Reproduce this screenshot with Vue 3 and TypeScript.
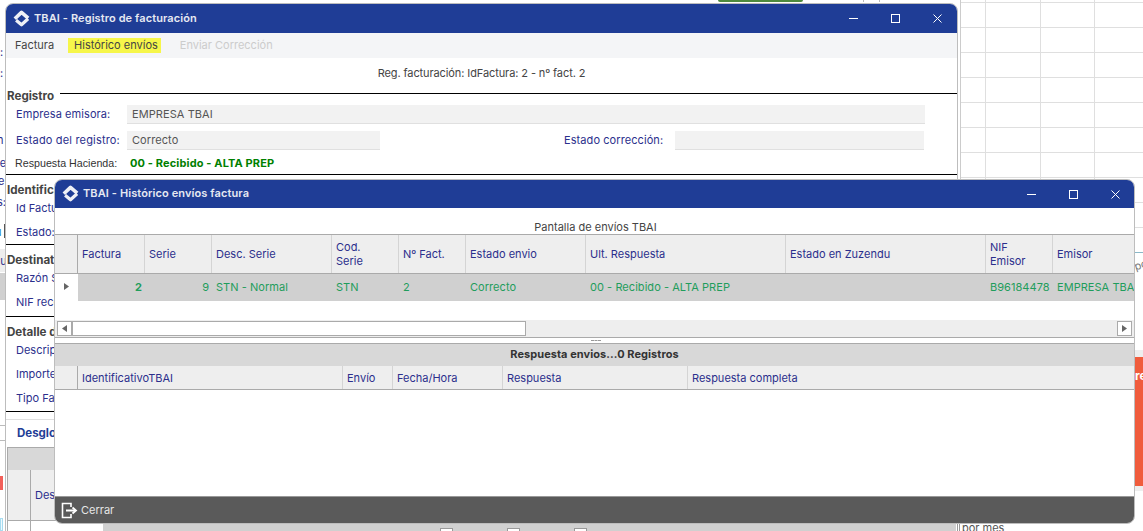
<script setup lang="ts">
interface Col { label: string; width: number; lines?: string[] }
const upperCols: Col[] = [
  { label: '', width: 23 },
  { label: 'Factura', width: 67 },
  { label: 'Serie', width: 67 },
  { label: 'Desc. Serie', width: 120 },
  { label: '', lines: ['Cod.', 'Serie'], width: 67 },
  { label: 'Nº Fact.', width: 67 },
  { label: 'Estado envio', width: 120 },
  { label: 'Ult. Respuesta', width: 200 },
  { label: 'Estado en Zuzendu', width: 200 },
  { label: '', lines: ['NIF', 'Emisor'], width: 67 },
  { label: 'Emisor', width: 81 }
]
const row = [
  { text: '', cls: 'blank' },
  { text: '2', cls: 'num strong' },
  { text: '9', cls: 'num' },
  { text: 'STN - Normal', cls: '' },
  { text: 'STN', cls: '' },
  { text: '2', cls: '' },
  { text: 'Correcto', cls: '' },
  { text: '00 - Recibido - ALTA PREP', cls: '' },
  { text: '', cls: '' },
  { text: 'B96184478', cls: '' },
  { text: 'EMPRESA TBAI', cls: '' }
]
const lowerCols: Col[] = [
  { label: '', width: 23 },
  { label: 'IdentificativoTBAI', width: 265 },
  { label: 'Envío', width: 50 },
  { label: 'Fecha/Hora', width: 110 },
  { label: 'Respuesta', width: 185 },
  { label: 'Respuesta completa', width: 446 }
]
const sections = [
  { title: 'Identificación', rows: ['Id Factura:', 'Estado:'], cls: 'sec-a' },
  { title: 'Destinatario', rows: ['Razón Social:', 'NIF receptor:'], cls: 'sec-b' },
  { title: 'Detalle de la factura', rows: ['Descripción:', 'Importe:', 'Tipo Factura:'], cls: 'sec-c' }
]
const grid = (cols: Col[]) => ({ gridTemplateColumns: cols.map(c => c.width + 'px').join(' ') })
</script>

<template>
  <div class="desk">
    <!-- application behind the windows -->
    <div class="sheet"></div>
    <div class="top-green"></div>
    <div class="top-tick t1"></div>
    <div class="top-tick t2"></div>
    <div class="back-left">
      <span class="bl b1">:</span>
      <span class="bl b2">:</span>
      <span class="bl b3">n</span>
      <span class="bl b4">le</span>
      <span class="bl b5">e</span>
      <span class="bl b6">s:</span>
      <span class="bl b7">u</span>
      <span class="bl-box"></span>
      <span class="bl-head">cu</span>
      <span class="bl-row"></span>
      <span class="bl-line l1"></span>
      <span class="bl-line l2"></span>
      <span class="bl-red"></span>
      <span class="bl-blue"></span>
    </div>
    <div class="back-right">
      <div class="br-teal"></div>
      <span class="br-rot">por</span>
      <div class="br-grey"></div>
      <div class="br-orange">re</div>
      <div class="br-grey2"></div>
    </div>

    <!-- window 1 -->
    <section class="win win-one">
      <header class="title title-one">
        <svg class="logo" viewBox="0 0 17 17" width="17" height="17" fill="none" stroke="#eef0f6" stroke-width="3.6" stroke-linejoin="round">
          <path d="M1.800 8.800 8.500 2.400l6.700 5.700" />
          <path d="M3.100 10.200l5.400 4.600 6.600-6" stroke-width="3.200" />
        </svg>
        <span class="title-text">TBAI - Registro de facturación</span>
        <div class="ctrls">
          <svg width="9" height="9" viewBox="0 0 9 9" stroke="#fff" fill="none"><path d="M0 4.500h9" /></svg>
          <svg width="9" height="9" viewBox="0 0 9 9" stroke="#fff" fill="none"><rect x=".5" y=".5" width="8" height="8" /></svg>
          <svg width="9" height="9" viewBox="0 0 9 9" stroke="#fff" fill="none"><path d="M.5.5l8 8M8.500.5l-8 8" /></svg>
        </div>
      </header>
      <nav class="menu">
        <span class="mi">Factura</span>
        <span class="mi hl">Histórico envíos</span>
        <span class="mi off">Enviar Corrección</span>
      </nav>
      <div class="caption-one">Reg. facturación: IdFactura: 2 - nº fact. 2</div>
      <div class="legend"><strong>Registro</strong><i></i></div>
      <div class="frow">
        <label class="lb">Empresa emisora:</label>
        <div class="fld wide">EMPRESA TBAI</div>
      </div>
      <div class="frow second">
        <label class="lb">Estado del registro:</label>
        <div class="fld half">Correcto</div>
        <label class="lb lb2">Estado corrección:</label>
        <div class="fld half2"></div>
      </div>
      <div class="frow third">
        <label class="lb dark">Respuesta Hacienda:</label>
        <b class="ok">00 - Recibido - ALTA PREP</b>
      </div>
      <div v-for="s in sections" :key="s.title" class="sec" :class="s.cls">
        <strong class="sec-head">{{ s.title }}</strong>
        <div v-for="r in s.rows" :key="r" class="sec-row">{{ r }}</div>
      </div>
      <div class="desglose">
        <strong>Desglose</strong>
      </div>
      <div class="dtable">
        <div class="dt-top"></div>
        <div class="dt-head"><span class="dt-a"></span><span class="dt-b">Descripción</span></div>
        <div class="dt-foot"><span class="dt-a"></span></div>
      </div>
      <div class="back-bottom">
        <span class="chk c1"></span><span class="chk c2"></span><span class="chk c3"></span>
      </div>
    </section>
    <span class="por-mes">por mes</span>
    <span class="v-dbl"></span>

    <!-- window 2 -->
    <section class="win win-two">
      <header class="title title-two">
        <svg class="logo" viewBox="0 0 17 17" width="17" height="17" fill="none" stroke="#eef0f6" stroke-width="3.6" stroke-linejoin="round">
          <path d="M1.800 8.800 8.500 2.400l6.700 5.700" />
          <path d="M3.100 10.200l5.400 4.600 6.600-6" stroke-width="3.200" />
        </svg>
        <span class="title-text">TBAI - Histórico envíos factura</span>
        <div class="ctrls">
          <svg width="9" height="9" viewBox="0 0 9 9" stroke="#fff" fill="none"><path d="M0 4.500h9" /></svg>
          <svg width="9" height="9" viewBox="0 0 9 9" stroke="#fff" fill="none"><rect x=".5" y=".5" width="8" height="8" /></svg>
          <svg width="9" height="9" viewBox="0 0 9 9" stroke="#fff" fill="none"><path d="M.5.5l8 8M8.500.5l-8 8" /></svg>
        </div>
      </header>
      <div class="caption-two">Pantalla de envíos TBAI</div>
      <div class="thead upper" :style="grid(upperCols)">
        <div v-for="(c, i) in upperCols" :key="i" class="th">
          <template v-if="c.lines"><span>{{ c.lines[0] }}<br />{{ c.lines[1] }}</span></template>
          <template v-else>{{ c.label }}</template>
        </div>
      </div>
      <div class="trow" :style="grid(upperCols)">
        <div v-for="(c, i) in row" :key="i" class="td" :class="c.cls">
          <svg v-if="i === 0" width="5" height="7" viewBox="0 0 5 7"><path d="M0 0l5 3.500L0 7z" fill="#666" /></svg>
          {{ c.text }}
        </div>
      </div>
      <div class="spacer-a"></div>
      <div class="hscroll">
        <span class="sbtn"><svg width="5" height="7" viewBox="0 0 5 7"><path d="M5 0L0 3.500 5 7z" fill="#666" /></svg></span>
        <span class="sthumb"></span>
        <span class="sbtn end"><svg width="5" height="7" viewBox="0 0 5 7"><path d="M0 0l5 3.500L0 7z" fill="#666" /></svg></span>
      </div>
      <div class="splitter"><span></span></div>
      <div class="lower-title">Respuesta envios...0 Registros</div>
      <div class="thead lower" :style="grid(lowerCols)">
        <div v-for="(c, i) in lowerCols" :key="i" class="th">{{ c.label }}</div>
      </div>
      <div class="empty"></div>
      <footer class="foot">
        <svg width="17" height="17" viewBox="0 0 17 17" fill="none" stroke="#fff" stroke-width="1.600">
          <path d="M10 5V1.500H1.500v14H10V12" />
          <path d="M5 8.500h9" stroke-width="2" />
          <path d="M11.500 5.500l3.500 3-3.500 3" stroke-width="1.800" />
        </svg>
        <span>Cerrar</span>
      </footer>
    </section>
  </div>
</template>

<style>
html, body { margin: 0; padding: 0; background: #fff; }
</style>

<style scoped>
.desk {
  position: relative;
  width: 1143px;
  height: 531px;
  overflow: hidden;
  background: #fff;
  font-family: Inter, "Liberation Sans", sans-serif;
  font-size: 11px;
  color: #444;
}
.sheet {
  position: absolute;
  left: 960px;
  top: 0;
  width: 183px;
  height: 252px;
  border-left: 1px solid #ccc;
  box-sizing: border-box;
  background-image:
    repeating-linear-gradient(to bottom, transparent 0 2px, #dfdfdf 2px 3px, transparent 3px 25px),
    linear-gradient(#dfdfdf, #dfdfdf),
    linear-gradient(#dfdfdf, #dfdfdf),
    linear-gradient(#dfdfdf, #dfdfdf);
  background-size: 100% 100%, 1px 100%, 1px 100%, 1px 100%;
  background-position: 0 0, 24px 0, 79px 0, 133px 0;
  background-repeat: no-repeat;
}
.top-green { position: absolute; left: 718px; top: 0; width: 85px; height: 2px; background: #4d8a3d; border-radius: 0 0 4px 4px; }
.top-tick { position: absolute; top: 0; width: 1px; height: 2px; background: #bbb; }
.t1 { left: 863px; }
.t2 { left: 879px; }

.back-left { position: absolute; left: 0; top: 0; width: 5px; height: 531px; overflow: hidden; color: #2b2f8c; }
.bl { position: absolute; left: 0; line-height: 14px; }
.b1 { top: 45px; }
.b2 { top: 66px; }
.b3 { top: 133px; left: -3px; }
.b4 { top: 156px; left: -3px; }
.b5 { top: 174px; left: -2px; }
.b6 { top: 195px; left: -3px; }
.b7 { top: 225px; left: -5px; color: #1b7fc4; }
.bl-box { position: absolute; left: 4px; top: 224px; width: 1px; height: 14px; background: #555; }
.bl-head { position: absolute; left: 0; top: 249px; width: 5px; height: 23px; background: #eee; line-height: 24px; text-indent: -6px; overflow: hidden; }
.bl-row { position: absolute; left: 0; top: 273px; width: 5px; height: 27px; background: #d0d0d0; }
.bl-line { position: absolute; left: 0; width: 5px; height: 1px; background: #bbb; }
.l1 { top: 425px; }
.l2 { top: 440px; }
.bl-red { position: absolute; left: 0; top: 476px; width: 3px; height: 14px; background: #f2605a; }
.bl-blue { position: absolute; left: 0; top: 518px; width: 3px; height: 13px; border: 1px solid #a8dcf0; box-sizing: border-box; background: #eefaff; }

.back-right { position: absolute; left: 1134px; top: 252px; width: 9px; height: 279px; overflow: hidden; }
.br-teal { height: 1px; background: #8ab8c8; }
.br-rot { position: absolute; left: 0; top: 5px; color: #777; transform: rotate(-18deg); }
.br-grey { position: absolute; left: 0; top: 98px; width: 9px; height: 7px; background: #eee; }
.br-orange { position: absolute; left: 0; top: 105px; width: 9px; height: 129px; background: #f05c3c; color: #fff; font-weight: 700; font-size: 12px; line-height: 37px; text-indent: 1px; white-space: nowrap; overflow: hidden; }
.br-grey2 { position: absolute; left: 0; top: 234px; width: 9px; height: 5px; background: #eee; }

.back-bottom { position: absolute; left: 97px; top: 520px; width: 853px; height: 8px; background: #d0d0d0; }
.chk { position: absolute; top: 4px; width: 13px; height: 13px; border: 1px solid #999; background: #fff; box-sizing: border-box; }
.c1 { left: 337px; }
.c2 { left: 404px; }
.c3 { left: 471px; }
.por-mes { position: absolute; left: 962px; top: 521px; font-size: 11px; line-height: 14px; color: #555; }
.v-dbl { position: absolute; left: 957px; top: 524px; width: 1px; height: 7px; border-left: 1px solid #999; border-right: 1px solid #999; }

.win {
  position: absolute;
  display: flex;
  flex-direction: column;
  box-sizing: border-box;
  background: #fff;
  border: 1px solid #bdbdbd;
  overflow: hidden;
}
.win-one { left: 5px; top: 3px; width: 953px; height: 560px; border-radius: 8px 8px 0 0; }
.win-two { left: 54px; top: 179px; width: 1081px; height: 345px; border-radius: 8px; }

.title { display: flex; align-items: center; flex: none; background: #1f3d96; color: #e6e9f2; font-weight: 600; letter-spacing: .1px; }
.title-one { height: 29px; padding-left: 7px; }
.title-two { height: 28px; padding-left: 7px; }
.title-text { margin: -2px 0 0 4px; font-size: 11px; }
.logo { margin-top: -1px; }
.ctrls { margin-left: auto; display: flex; gap: 33px; }
.title-one .ctrls { padding-right: 15px; }
.title-two .ctrls { padding-right: 14px; }

.menu { display: flex; align-items: center; flex: none; height: 25px; background: #f4f5f7; padding-left: 3px; color: #444; }
.mi { padding: 0 6px; line-height: 15px; }
.hl { background: #f6f64a; margin-left: 8px; padding-right: 3px; }
.off { color: #ccc; margin-left: 13px; }

.caption-one { height: 30px; padding-top: 8px; box-sizing: border-box; text-align: center; line-height: 14px; flex: none; letter-spacing: -.1px; }
.legend { display: flex; height: 14px; flex: none; padding-left: 1px; color: #444; }
.legend strong { font-size: 11.6px; line-height: 16px; font-weight: 700; }
.legend i { flex: 1; height: 1px; background: #000; margin: 5px 0 0 6px; }

.frow { display: flex; align-items: center; flex: none; height: 19px; margin-top: 3px; padding-left: 10px; color: #2b2f8c; letter-spacing: .08px; }
.frow.second { margin-top: 7px; }
.frow.third { margin-top: 4px; height: 18px; padding-left: 9px; }
.lb { width: 111px; flex: none; padding-bottom: 2px; box-sizing: border-box; }
.frow.second .lb:first-child { letter-spacing: .17px; }
.lb.dark { color: #333; width: 115px; padding-bottom: 0; font-family: "Liberation Sans", sans-serif; font-size: 10.7px; letter-spacing: 0; }
.lb2 { margin-left: 184px; width: 111px; }
.fld { box-sizing: border-box; height: 19px; background: #f2f2f2; border-bottom: 1px solid #e0e0e0; padding-left: 5px; line-height: 18px; color: #555; }
.wide { width: 798px; }
.half { width: 253px; }
.half2 { width: 249px; }
.ok { color: #008000; font-weight: 700; letter-spacing: .13px; }

.sec { flex: none; border-top: 1px solid #000; padding-top: 7px; color: #2b2f8c; box-sizing: border-box; }
.sec-a { margin-top: 2px; height: 70px; }
.sec-b { height: 72px; }
.sec-c { border-bottom: 1px solid #000; height: 96px; }
.sec-head { display: block; padding-left: 1px; height: 14px; line-height: 16px; font-size: 11.6px; font-weight: 700; color: #444; white-space: nowrap; }
.sec-row { height: 24px; line-height: 24px; padding-left: 10px; white-space: nowrap; }
.desglose { flex: none; margin-top: 7px; border-top: 1px solid #e0e0e0; height: 28px; padding: 6px 0 0 11px; box-sizing: border-box; line-height: 14px; color: #1f3d96; font-size: 11.5px; }
.dtable { flex: none; margin-left: 1px; border: 1px solid #aaa; border-right: 0; }
.dt-top { height: 22px; background: #d8d8d8; }
.dt-head { display: flex; height: 50px; background: #eee; border-bottom: 1px solid #aaa; color: #2b2f8c; }
.dt-a { width: 22px; border-right: 1px solid #aaa; flex: none; }
.dt-b { padding-left: 4px; line-height: 50px; white-space: nowrap; }
.dt-foot { display: flex; height: 20px; }

.caption-two { height: 26px; flex: none; text-align: center; line-height: 14px; padding: 12px 0 0 2px; box-sizing: border-box; }
.thead { display: grid; flex: none; background: #eee; color: #2b2f8c; overflow: hidden; }
.upper { height: 40px; border-top: 1px solid #aaa; border-bottom: 1px solid #aaa; box-sizing: border-box; }
.lower { height: 24px; border-bottom: 1px solid #aaa; box-sizing: border-box; }
.th { display: flex; align-items: center; padding-left: 4px; border-right: 1px solid #d4d4d4; white-space: nowrap; line-height: 14px; overflow: hidden; }
.th:first-child { border-right-color: #aaa; }
.th:last-child { border-right: 0; }
.trow { display: grid; flex: none; height: 27px; background: #d0d0d0; color: #1f9d5c; overflow: hidden; letter-spacing: .05px; }
.td { display: flex; align-items: center; padding: 0 0 2px 4px; white-space: nowrap; overflow: hidden; }
.td.blank { background: #fff; padding-left: 9px; }
.td.num { justify-content: flex-end; padding-right: 3px; padding-left: 0; }
.td.strong { font-weight: 700; }
.spacer-a { height: 19px; flex: none; }
.hscroll { display: flex; align-items: center; flex: none; height: 17px; background: #eee; border-bottom: 1px solid #aaa; box-sizing: content-box; padding: 0 2px 0 2px; }
.sbtn { display: flex; align-items: center; justify-content: center; box-sizing: border-box; width: 15px; height: 15px; background: #fff; border: 1px solid #aaa; }
.sbtn.end { margin-left: auto; }
.sthumb { box-sizing: border-box; width: 454px; height: 15px; background: #fff; border: 1px solid #aaa; }
.splitter { height: 5px; flex: none; display: flex; justify-content: center; padding-top: 2px; box-sizing: border-box; }
.splitter span { display: block; width: 10px; height: 0; margin-left: 2px; border-top: 1px dashed #999; }
.lower-title { flex: none; height: 23px; border-top: 1px solid #aaa; box-sizing: border-box; background: #d8d8d8; text-align: center; line-height: 21px; font-weight: 700; color: #333; letter-spacing: .06px; }
.empty { flex: 1; }
.foot { flex: none; display: flex; align-items: center; gap: 3px; height: 27px; box-sizing: border-box; padding-left: 6px; background: #5a5a5a; border-top: 1px solid #999; color: #e6e6e6; }
</style>
